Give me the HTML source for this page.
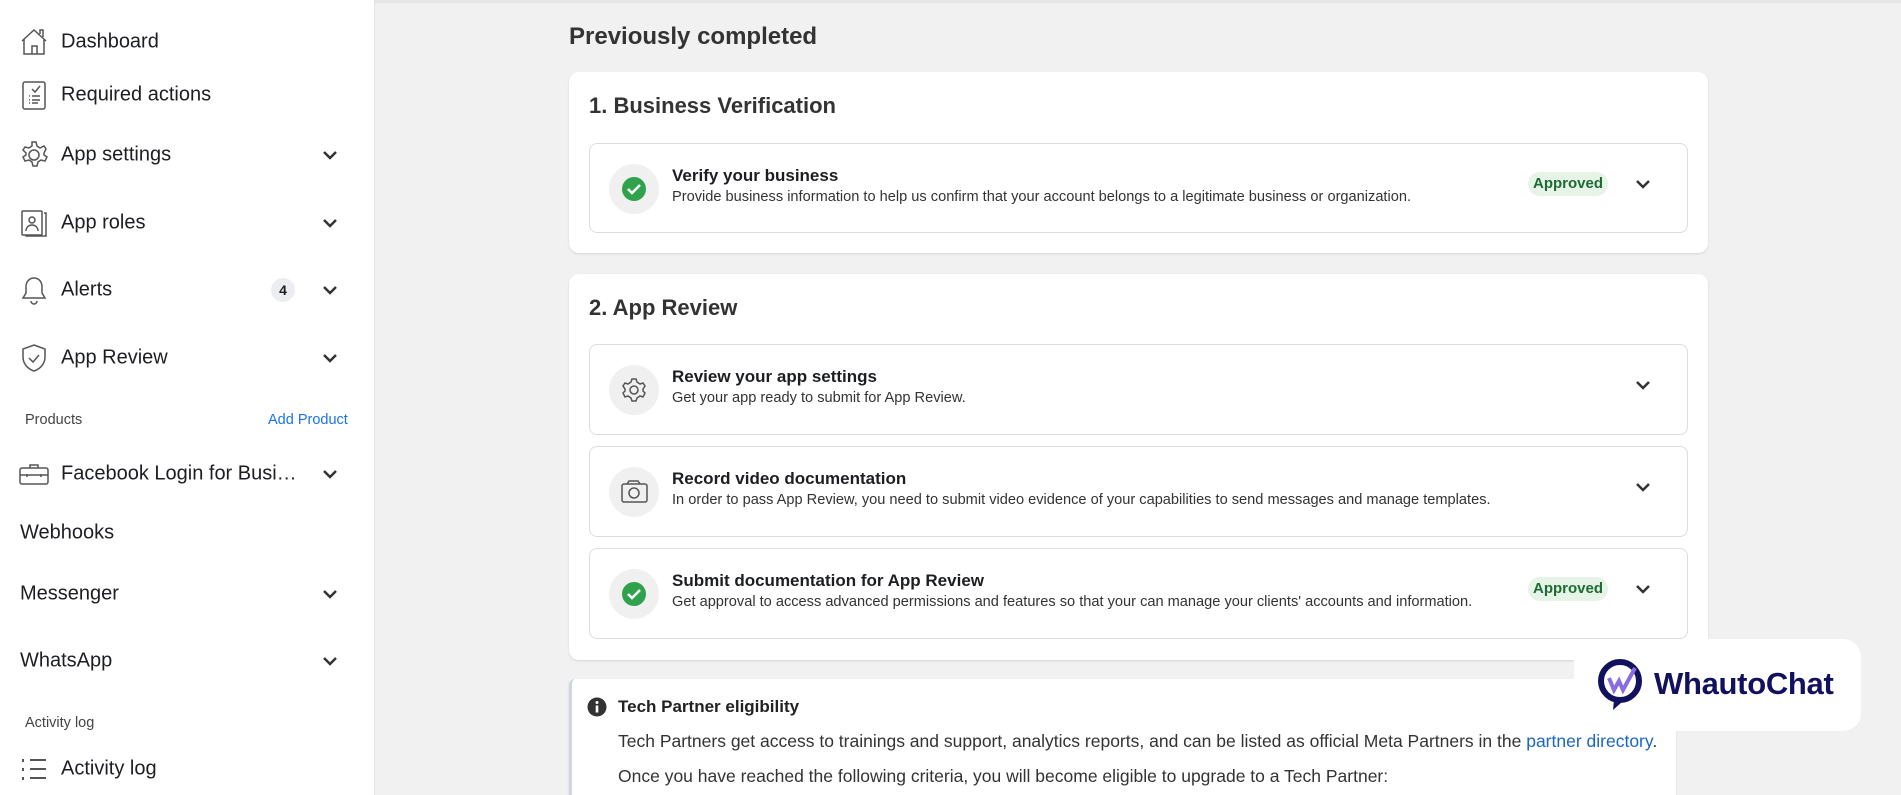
<!DOCTYPE html>
<html style="overflow:hidden;height:795px"><head><meta charset="utf-8"><style>
*{box-sizing:border-box;margin:0;padding:0}
body{width:1901px;height:795px;overflow:hidden;background:#f1f1f1;font-family:"Liberation Sans",Arial,sans-serif;color:#1c1e21;position:relative}
.a{position:absolute;white-space:nowrap}
#side{position:absolute;left:0;top:0;width:375px;height:795px;background:#fff;border-right:1px solid #e4e4e4}
.nav{position:absolute;left:61px;font-size:20px;color:#1c1e21;transform:translateY(-50%)}
.ic{position:absolute;left:19px;width:30px;height:30px;transform:translateY(-50%)}
.chev{position:absolute;left:322px;width:16px;height:10px;transform:translateY(-50%)}
.card{position:absolute;background:#fff;border-radius:10px;box-shadow:0 1px 2px rgba(0,0,0,.12)}
.row{position:absolute;left:589px;width:1099px;border:1px solid #dadde1;border-radius:8px;background:#fff}
.circ{position:absolute;left:19px;top:20px;width:50px;height:50px;border-radius:50%;background:#f0f0f0}
.rt{position:absolute;left:82px;top:22px;font-size:17px;font-weight:bold;white-space:nowrap}
.rd{position:absolute;left:82px;top:45px;font-size:14.6px;color:#333;white-space:nowrap}
.pill{position:absolute;left:938px;top:28px;width:80px;height:24px;border-radius:12px;background:#e5f4e7;color:#1e6b33;font-size:15px;font-weight:bold;text-align:center;line-height:24px}
.rc{position:absolute;left:1045px;top:35px}
</style></head><body>
<div style="position:absolute;left:0;top:0;width:1901px;height:3px;background:#e6e6e6"></div>
<div id="side">
<svg class="ic" style="top:42px" viewBox="0 0 30 30" fill="none" stroke="#555" stroke-width="1.5"><path d="M3 14L15 3l12 11M5 12v15h20V12M13 27v-8h5v8M21 7V3h3v7"/></svg>
<div class="nav" style="top:42px">Dashboard</div>
<svg class="ic" style="top:95px" viewBox="0 0 30 30" fill="none" stroke="#555" stroke-width="1.5"><rect x="4" y="2" width="22" height="27" rx="2"/><path d="M13 9l3 3 5-6M10 16h1M13 16h8M10 20h1M13 20h8M10 23h1M13 23h6"/></svg>
<div class="nav" style="top:95px">Required actions</div>
<svg class="ic" style="top:155px" viewBox="0 0 30 30" fill="none" stroke="#555" stroke-width="1.5"><circle cx="15" cy="15" r="5"/><path d="M13 2h4l1 4 3 2 4-2 2 3-2 4v2l3 2-2 4-4-1-3 2-1 4h-4l-1-4-3-2-4 1-2-4 3-2v-2l-3-3 2-3 4 1 3-2z"/></svg>
<div class="nav" style="top:155px">App settings</div>
<svg class="chev" style="top:155px" viewBox="0 0 16 10"><path d="M2 2l6 6 6-6" fill="none" stroke="#333" stroke-width="2.5"/></svg>
<svg class="ic" style="top:223px" viewBox="0 0 30 30" fill="none" stroke="#555" stroke-width="1.5"><rect x="3" y="3" width="20" height="24" rx="1"/><path d="M25 5h2v23H7v-1"/><circle cx="13" cy="12" r="3"/><path d="M7 23c0-4 3-6 6-6s6 2 6 6"/></svg>
<div class="nav" style="top:223px">App roles</div>
<svg class="chev" style="top:223px" viewBox="0 0 16 10"><path d="M2 2l6 6 6-6" fill="none" stroke="#333" stroke-width="2.5"/></svg>
<svg class="ic" style="top:290px" viewBox="0 0 30 30" fill="none" stroke="#555" stroke-width="1.5"><path d="M15 3c-5 0-8 4-8 9v6l-3 5h22l-3-5v-6c0-5-3-9-8-9zM12 26a3 3 0 0 0 6 0"/></svg>
<div class="nav" style="top:290px">Alerts</div>
<div class="a" style="left:271px;top:278px;width:24px;height:24px;border-radius:12px;background:#ebedf0;font-size:14px;font-weight:bold;text-align:center;line-height:24px">4</div>
<svg class="chev" style="top:290px" viewBox="0 0 16 10"><path d="M2 2l6 6 6-6" fill="none" stroke="#333" stroke-width="2.5"/></svg>
<svg class="ic" style="top:358px" viewBox="0 0 30 30" fill="none" stroke="#555" stroke-width="1.5"><path d="M15 2l11 4v8c0 7-5 12-11 14C9 26 4 21 4 14V6z"/><path d="M10 15l4 4 6-7"/></svg>
<div class="nav" style="top:358px">App Review</div>
<svg class="chev" style="top:358px" viewBox="0 0 16 10"><path d="M2 2l6 6 6-6" fill="none" stroke="#333" stroke-width="2.5"/></svg>
<div class="a" style="left:25px;top:412px;font-size:14.5px;color:#444">Products</div>
<div class="a" style="left:268px;top:412px;font-size:14.5px;color:#1a73e8">Add Product</div>
<svg class="ic" style="top:474px" viewBox="0 0 30 30" fill="none" stroke="#555" stroke-width="1.5"><rect x="1" y="9" width="28" height="16" rx="2"/><path d="M11 9V6h8v3M1 16h28M8 15v3M22 15v3"/></svg>
<div class="nav" style="top:474px">Facebook Login for Busi…</div>
<svg class="chev" style="top:474px" viewBox="0 0 16 10"><path d="M2 2l6 6 6-6" fill="none" stroke="#333" stroke-width="2.5"/></svg>
<div class="nav" style="top:533px;left:20px">Webhooks</div>
<div class="nav" style="top:594px;left:20px">Messenger</div>
<svg class="chev" style="top:594px" viewBox="0 0 16 10"><path d="M2 2l6 6 6-6" fill="none" stroke="#333" stroke-width="2.5"/></svg>
<div class="nav" style="top:661px;left:20px">WhatsApp</div>
<svg class="chev" style="top:661px" viewBox="0 0 16 10"><path d="M2 2l6 6 6-6" fill="none" stroke="#333" stroke-width="2.5"/></svg>
<div class="a" style="left:25px;top:715px;font-size:14.5px;color:#444">Activity log</div>
<svg class="ic" style="top:769px" viewBox="0 0 30 30" fill="none" stroke="#555" stroke-width="2"><path d="M4 5v3M4 14v3M4 23v3M11 6h16M11 15h16M11 24h16"/></svg>
<div class="nav" style="top:769px">Activity log</div>
</div>

<div class="a" style="left:569px;top:23px;font-size:24px;font-weight:bold;color:#333">Previously completed</div>

<div class="card" style="left:569px;top:72px;width:1139px;height:181px"></div>
<div class="a" style="left:589px;top:93px;font-size:22px;font-weight:bold;color:#333">1. Business Verification</div>
<div class="row" style="top:143px;height:90px">
<div class="circ"><svg width="50" height="50"><circle cx="25" cy="25" r="12" fill="#31a24c"/><path d="M19 25l4 4 8-8" fill="none" stroke="#fff" stroke-width="2.5"/></svg></div>
<div class="rt">Verify your business</div>
<div class="rd">Provide business information to help us confirm that your account belongs to a legitimate business or organization.</div>
<div class="pill">Approved</div>
<svg class="rc" width="16" height="10"><path d="M2 2l6 6 6-6" fill="none" stroke="#333" stroke-width="2.5"/></svg>
</div>

<div class="card" style="left:569px;top:274px;width:1139px;height:386px"></div>
<div class="a" style="left:589px;top:295px;font-size:22px;font-weight:bold;color:#333">2. App Review</div>
<div class="row" style="top:344px;height:91px">
<div class="circ"><svg width="50" height="50" fill="none" stroke="#555" stroke-width="1.5"><circle cx="25" cy="25" r="4"/><path d="M23 14h4l1 3 3 2 3-1 2 3-2 3v2l2 2-2 4-3-1-3 2-1 3h-4l-1-3-3-2-3 1-2-4 2-2v-2l-2-3 2-3 3 1 3-2z"/></svg></div>
<div class="rt">Review your app settings</div>
<div class="rd">Get your app ready to submit for App Review.</div>
<svg class="rc" width="16" height="10"><path d="M2 2l6 6 6-6" fill="none" stroke="#333" stroke-width="2.5"/></svg>
</div>
<div class="row" style="top:446px;height:91px">
<div class="circ"><svg width="50" height="50" fill="none" stroke="#555" stroke-width="1.5"><rect x="13" y="17" width="25" height="18" rx="2"/><path d="M18 17l2-3h9l2 3"/><circle cx="25" cy="26" r="5"/></svg></div>
<div class="rt">Record video documentation</div>
<div class="rd">In order to pass App Review, you need to submit video evidence of your capabilities to send messages and manage templates.</div>
<svg class="rc" width="16" height="10"><path d="M2 2l6 6 6-6" fill="none" stroke="#333" stroke-width="2.5"/></svg>
</div>
<div class="row" style="top:548px;height:91px">
<div class="circ"><svg width="50" height="50"><circle cx="25" cy="25" r="12" fill="#31a24c"/><path d="M19 25l4 4 8-8" fill="none" stroke="#fff" stroke-width="2.5"/></svg></div>
<div class="rt">Submit documentation for App Review</div>
<div class="rd">Get approval to access advanced permissions and features so that your can manage your clients' accounts and information.</div>
<div class="pill">Approved</div>
<svg class="rc" width="16" height="10"><path d="M2 2l6 6 6-6" fill="none" stroke="#333" stroke-width="2.5"/></svg>
</div>

<div class="card" style="left:569px;top:679px;width:1107px;height:116px;border-left:3px solid #cfd6e0;border-radius:6px 6px 0 0"></div>
<svg class="a" style="left:587px;top:697px" width="20" height="20"><circle cx="10" cy="10" r="9.5" fill="#333"/><rect x="8.7" y="8.5" width="2.6" height="7" fill="#fff"/><circle cx="10" cy="5.5" r="1.5" fill="#fff"/></svg>
<div class="a" style="left:618px;top:697px;font-size:17px;font-weight:bold;color:#222">Tech Partner eligibility</div>
<div class="a" style="left:618px;top:731px;font-size:17.5px;color:#333">Tech Partners get access to trainings and support, analytics reports, and can be listed as official Meta Partners in the <span style="color:#1a66c6">partner directory</span>.</div>
<div class="a" style="left:618px;top:766px;font-size:17.5px;color:#333">Once you have reached the following criteria, you will become eligible to upgrade to a Tech Partner:</div>

<div class="a" style="left:1574px;top:639px;width:287px;height:92px;background:#fff;border-radius:18px"></div>
<svg class="a" style="left:1596px;top:656px" width="52" height="60" viewBox="0 0 52 60"><circle cx="24" cy="25" r="19" fill="none" stroke="#12115e" stroke-width="6"/><path d="M18 44l-1 10 9-8z" fill="#12115e"/><path d="M13 22l5 12 5-9 4 9 12-22" fill="none" stroke="#8a6de0" stroke-width="4"/></svg>
<div class="a" style="left:1654px;top:666px;font-size:31px;font-weight:bold;color:#12115e;letter-spacing:-0.3px">WhautoChat</div>
</body></html>
